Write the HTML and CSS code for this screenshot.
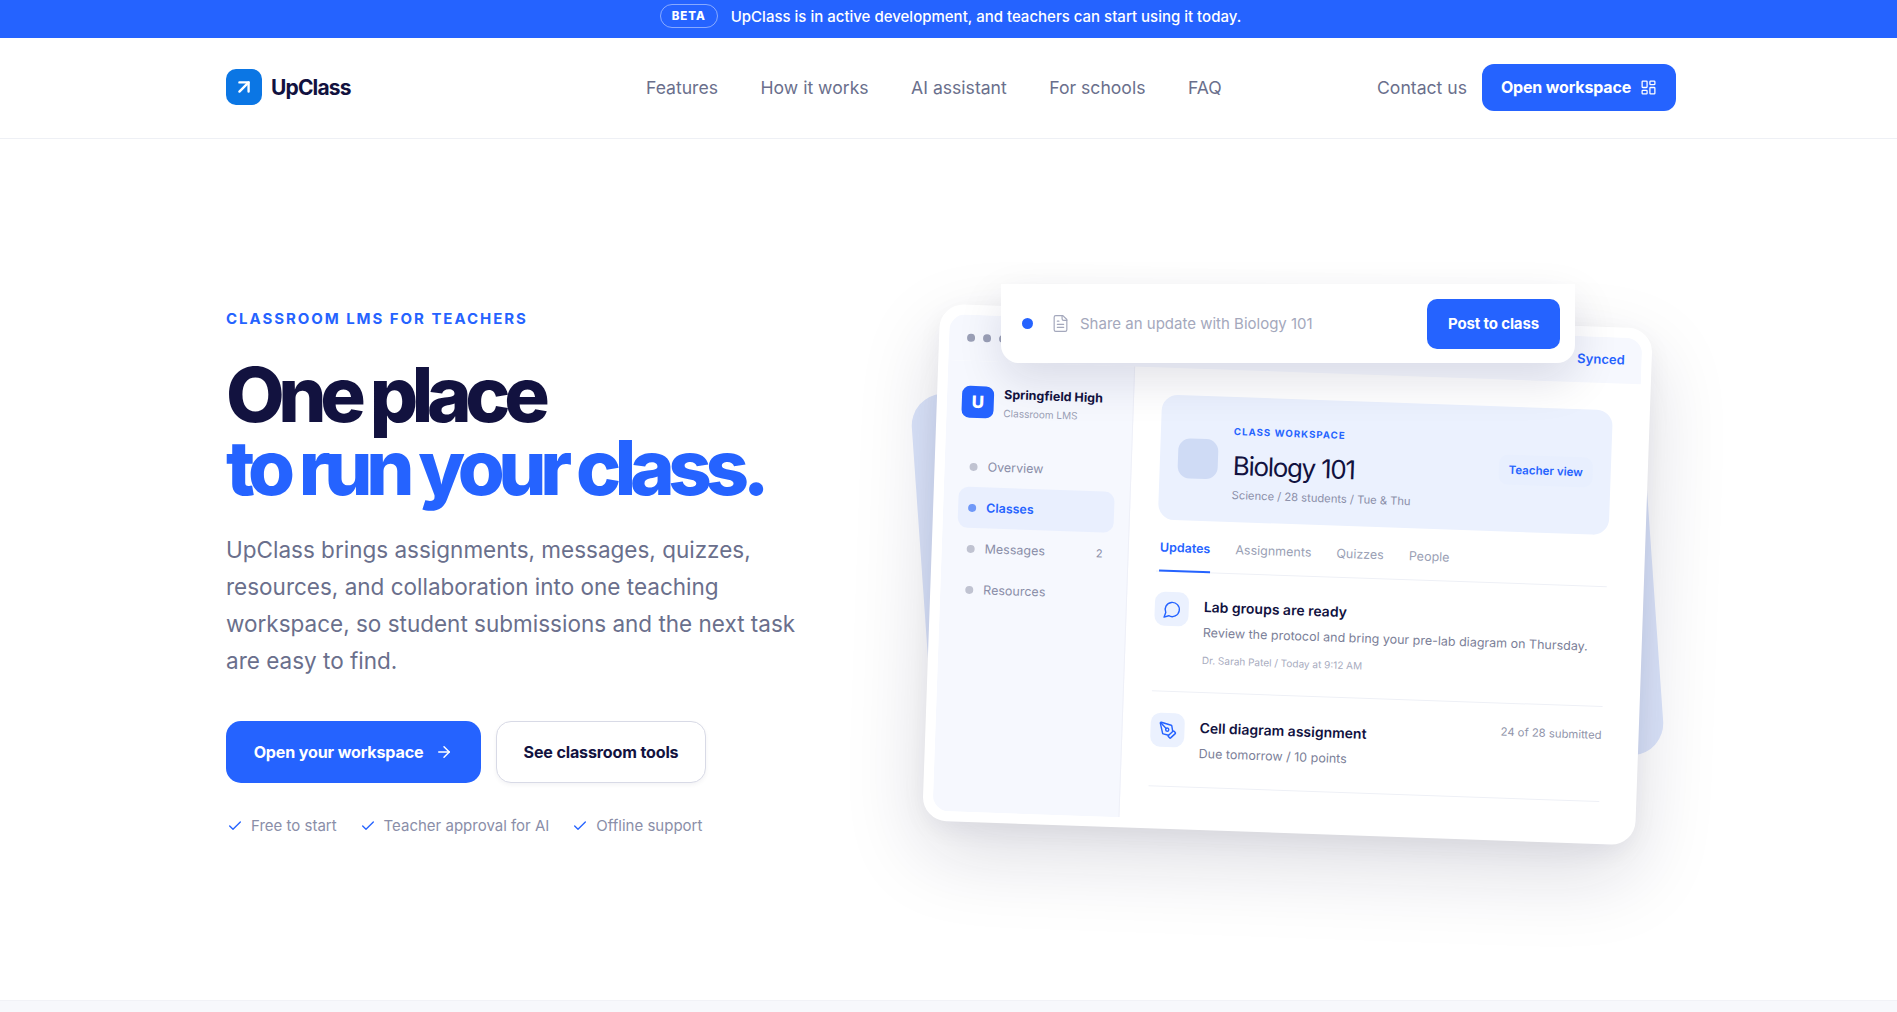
FILE: index.html
```html
<!DOCTYPE html>
<html lang="en">
<head>
    <meta charset="UTF-8">
    <title>UpClass</title>
    <link rel="stylesheet" href="styles.css">
</head>
<body>
    <div class="banner">
        <span class="beta">BETA</span>
        <span>UpClass is in active development, and teachers can start using it today.</span>
    </div>

    <header class="nav">
        <div class="wrap nav-row">
            <a class="logo">
                <span class="logo-mark">
                    <svg viewBox="0 0 24 24" class="icon"><path d="M7 7h10v10"/><path d="M7 17 17 7"/></svg>
                </span>
                UpClass
            </a>
            <nav class="nav-links">
                <a>Features</a>
                <a>How it works</a>
                <a>AI assistant</a>
                <a>For schools</a>
                <a>FAQ</a>
            </nav>
            <div class="nav-actions">
                <a>Contact us</a>
                <button class="nav-btn">
                    Open workspace
                    <svg viewBox="0 0 24 24" class="icon"><rect x="3" y="3" width="7" height="9" rx="1"/><rect x="14" y="3" width="7" height="5" rx="1"/><rect x="14" y="12" width="7" height="9" rx="1"/><rect x="3" y="16" width="7" height="5" rx="1"/></svg>
                </button>
            </div>
        </div>
    </header>

    <main class="wrap hero">
        <section class="copy">
            <div class="eyebrow">CLASSROOM LMS FOR TEACHERS</div>
            <h1>One place<br><span>to run your class.</span></h1>
            <p class="lead">UpClass brings assignments, messages, quizzes, resources, and collaboration into one teaching workspace, so student submissions and the next task are easy to find.</p>
            <div class="cta">
                <button class="btn btn-primary">
                    Open your workspace
                    <svg viewBox="0 0 24 24" class="icon"><path d="M5 12h14"/><path d="m12 5 7 7-7 7"/></svg>
                </button>
                <button class="btn btn-ghost">See classroom tools</button>
            </div>
            <ul class="checks">
                <li><svg viewBox="0 0 24 24" class="icon"><path d="M20 6 9 17l-5-5"/></svg>Free to start</li>
                <li><svg viewBox="0 0 24 24" class="icon"><path d="M20 6 9 17l-5-5"/></svg>Teacher approval for AI</li>
                <li><svg viewBox="0 0 24 24" class="icon"><path d="M20 6 9 17l-5-5"/></svg>Offline support</li>
            </ul>
        </section>

        <section class="stage">
            <div class="back-sheet"></div>

            <div class="card">
                <div class="shell">
                    <div class="topbar">
                        <div class="dots"><i></i><i></i><i></i></div>
                        <span class="synced">Synced</span>
                    </div>
                    <div class="app">
                        <aside class="side">
                            <div class="school">
                                <span class="school-mark">U</span>
                                <div>
                                    <div class="school-name">Springfield High</div>
                                    <div class="school-sub">Classroom LMS</div>
                                </div>
                            </div>
                            <div class="side-item"><i></i>Overview</div>
                            <div class="side-item active"><i></i>Classes</div>
                            <div class="side-item"><i></i>Messages<span class="count">2</span></div>
                            <div class="side-item"><i></i>Resources</div>
                        </aside>
                        <div class="content">
                            <div class="class-head">
                                <span class="class-icon"></span>
                                <div class="class-info">
                                    <div class="class-tag">CLASS WORKSPACE</div>
                                    <div class="class-name">Biology 101</div>
                                    <div class="class-meta">Science / 28 students / Tue &amp; Thu</div>
                                </div>
                                <span class="pill">Teacher view</span>
                            </div>
                            <div class="tabs">
                                <span class="tab active">Updates</span>
                                <span class="tab">Assignments</span>
                                <span class="tab">Quizzes</span>
                                <span class="tab">People</span>
                            </div>
                            <div class="post post-first">
                                <span class="post-icon">
                                    <svg viewBox="0 0 24 24" class="icon"><path d="M7.9 20A9 9 0 1 0 4 16.1L2 22Z"/></svg>
                                </span>
                                <div class="post-body">
                                    <div class="post-title">Lab groups are ready</div>
                                    <div class="post-text">Review the protocol and bring your pre-lab diagram on Thursday.</div>
                                    <div class="post-meta">Dr. Sarah Patel / Today at 9:12 AM</div>
                                </div>
                            </div>
                            <div class="post post-second">
                                <span class="post-icon">
                                    <svg viewBox="0 0 24 24" class="icon"><path d="M15.707 21.293a1 1 0 0 1-1.414 0l-1.586-1.586a1 1 0 0 1 0-1.414l5.586-5.586a1 1 0 0 1 1.414 0l1.586 1.586a1 1 0 0 1 0 1.414z"/><path d="m18 13-1.375-6.874a1 1 0 0 0-.746-.776L3.235 2.028a1 1 0 0 0-1.207 1.207L5.35 15.879a1 1 0 0 0 .776.746L13 18"/><path d="m2.3 2.3 7.286 7.286"/><circle cx="11" cy="11" r="2"/></svg>
                                </span>
                                <div class="post-body">
                                    <div class="post-title">Cell diagram assignment</div>
                                    <div class="post-sub">Due tomorrow / 10 points</div>
                                </div>
                                <span class="post-count">24 of 28 submitted</span>
                            </div>
                        </div>
                    </div>
                </div>
            </div>

            <div class="composer">
                <span class="composer-dot"></span>
                <svg viewBox="0 0 24 24" class="icon composer-doc"><path d="M15 2H6a2 2 0 0 0-2 2v16a2 2 0 0 0 2 2h12a2 2 0 0 0 2-2V7Z"/><path d="M14 2v4a2 2 0 0 0 2 2h4"/><path d="M10 9H8"/><path d="M16 13H8"/><path d="M16 17H8"/></svg>
                <span class="composer-text">Share an update with Biology 101</span>
                <button class="composer-btn">Post to class</button>
            </div>
        </section>
    </main>

    <div class="next-section"></div>
</body>
</html>
```

FILE: styles.css
```css
* {
    box-sizing: border-box;
}
body {
    margin: 0;
    background: #fff;
    color: #12123f;
    font-family: Inter, "Liberation Sans", sans-serif;
    overflow-x: hidden;
}
button {
    font-family: inherit;
    border: 0;
    cursor: pointer;
}
.icon {
    fill: none;
    stroke: currentColor;
    stroke-width: 2;
    stroke-linecap: round;
    stroke-linejoin: round;
}
.wrap {
    width: 1450px;
    margin-left: 226px;
}

/* top banner */
.banner {
    height: 38px;
    padding: 0 0 6px 4px;
    background: #2563ff;
    color: #fff;
    font-size: 15px;
    font-weight: 500;
    display: flex;
    align-items: center;
    justify-content: center;
    gap: 13px;
}
.beta {
    height: 24px;
    width: 58px;
    border: 1px solid rgba(255, 255, 255, 0.45);
    border-radius: 12px;
    font-size: 11.5px;
    font-weight: 800;
    letter-spacing: 0.08em;
    display: flex;
    align-items: center;
    justify-content: center;
}

/* nav */
.nav {
    height: 101px;
    border-bottom: 1px solid #eef0f5;
}
.nav-row {
    height: 98px;
    display: flex;
    align-items: center;
    justify-content: space-between;
}
.logo {
    display: flex;
    align-items: center;
    gap: 9px;
    font-size: 21px;
    font-weight: 700;
    letter-spacing: -0.04em;
}
.logo-mark {
    width: 36px;
    height: 36px;
    border-radius: 10px;
    background: #0b76e4;
    color: #fff;
    display: flex;
    align-items: center;
    justify-content: center;
}
.logo-mark .icon {
    width: 22px;
    height: 22px;
    stroke-width: 2.6;
}
.nav-links {
    display: flex;
    gap: 42.5px;
    margin-left: 140px;
    font-size: 17.6px;
    color: #6a6f8c;
}
.nav-actions {
    display: flex;
    align-items: center;
    gap: 15px;
    font-size: 17.6px;
    color: #6a6f8c;
}
.nav-btn {
    width: 194px;
    height: 47px;
    border-radius: 12px;
    background: #2563ff;
    color: #fff;
    font-size: 16px;
    font-weight: 700;
    letter-spacing: -0.01em;
    display: flex;
    align-items: center;
    justify-content: center;
    gap: 9px;
}
.nav-btn .icon {
    width: 17px;
    height: 17px;
    stroke-width: 1.8;
}

/* hero */
.hero {
    height: 861px;
    display: grid;
    grid-template-columns: 576px 778px;
    column-gap: 96px;
    align-items: center;
}
.copy {
    align-self: start;
    padding-top: 170px;
}
.eyebrow {
    color: #2563ff;
    font-size: 15px;
    font-weight: 700;
    letter-spacing: 0.13em;
    line-height: 20px;
}
h1 {
    margin: 29px 0 0;
    font-size: 76px;
    font-weight: 800;
    line-height: 73px;
    letter-spacing: -0.084em;
}
h1 span {
    color: #2563ff;
}
.lead {
    margin: 27px 0 0;
    font-size: 22.5px;
    line-height: 37px;
    color: #6a6f8c;
}
.cta {
    display: flex;
    gap: 15px;
    margin-top: 42px;
}
.btn {
    height: 62px;
    border-radius: 15px;
    font-size: 16.1px;
    font-weight: 700;
    letter-spacing: -0.01em;
    display: flex;
    align-items: center;
    justify-content: center;
}
.btn-primary {
    width: 255px;
    gap: 12px;
    background: #2563ff;
    color: #fff;
}
.btn-primary .icon {
    width: 18px;
    height: 18px;
}
.btn-ghost {
    width: 210px;
    background: #fff;
    color: #12123f;
    border: 1.5px solid #d8dae6;
    box-shadow: 0 2px 4px rgba(18, 18, 63, 0.05);
}
.checks {
    list-style: none;
    margin: 32px 0 0;
    padding: 0 0 0 1px;
    display: flex;
    gap: 23px;
    font-size: 15px;
    line-height: 22px;
    color: #8a8ea8;
}
.checks li {
    display: flex;
    align-items: center;
    gap: 8px;
}
.checks .icon {
    width: 16px;
    height: 16px;
    color: #2563ff;
}

/* product mockup */
.stage {
    position: relative;
    height: 600px;
    margin-top: 9px;
    display: flex;
    align-items: center;
    justify-content: center;
}
.back-sheet {
    position: absolute;
    left: 25px;
    top: 96px;
    width: 729px;
    height: 409px;
    border-radius: 32px;
    background: #dbe4fa;
    transform: rotate(-4deg);
}
.card {
    position: relative;
    width: 713px;
    height: 517px;
    padding: 10px;
    border-radius: 24px;
    background: #fff;
    transform: rotate(2deg);
    box-shadow: 0 30px 80px rgba(18, 18, 63, 0.15), 0 8px 24px rgba(18, 18, 63, 0.05);
}
.shell {
    height: 100%;
    border-radius: 16px;
    overflow: hidden;
    display: flex;
    flex-direction: column;
}
.topbar {
    height: 46px;
    flex: none;
    padding: 0 17px 0 18px;
    background: #f6f8fe;
    display: flex;
    align-items: center;
    justify-content: space-between;
}
.dots {
    display: flex;
    gap: 8px;
}
.dots i {
    width: 8px;
    height: 8px;
    border-radius: 50%;
    background: #9ba0b7;
}
.synced {
    margin-bottom: 2px;
    color: #2563ff;
    font-size: 13px;
    font-weight: 600;
}
.app {
    flex: 1;
    display: flex;
}
.side {
    width: 187px;
    flex: none;
    padding: 24px 15px 0;
    background: #f6f8fe;
    border-right: 1px solid #eef0f8;
}
.school {
    display: flex;
    align-items: center;
    gap: 10px;
    margin: 0 0 27px 0;
}
.school-mark {
    width: 32px;
    height: 32px;
    flex: none;
    border-radius: 8px;
    background: #2563ff;
    color: #fff;
    font-size: 17px;
    font-weight: 800;
    display: flex;
    align-items: center;
    justify-content: center;
}
.school-name {
    font-size: 12.5px;
    font-weight: 700;
    line-height: 18px;
}
.school-sub {
    margin-top: 2px;
    font-size: 10px;
    line-height: 14px;
    color: #9a9fb5;
}
.side-item {
    height: 41px;
    padding: 0 10px;
    border-radius: 10px;
    font-size: 12.5px;
    color: #8a8ea8;
    display: flex;
    align-items: center;
    gap: 10px;
}
.side-item i {
    width: 8px;
    height: 8px;
    border-radius: 50%;
    background: #c0c3d1;
}
.side-item.active {
    background: #e9effe;
    color: #2563ff;
    font-weight: 600;
}
.side-item.active i {
    background: #6f98f8;
}
.count {
    margin-left: auto;
    font-size: 11px;
}
.content {
    flex: 1;
    padding: 27px 27px 0 28px;
    min-width: 0;
}
.class-head {
    height: 125px;
    padding: 0 18px;
    border-radius: 16px;
    background: #ebf1fe;
    display: flex;
    align-items: center;
}
.class-icon {
    width: 40px;
    height: 40px;
    flex: none;
    margin-right: 15px;
    border-radius: 12px;
    background: #cfdbf5;
}
.class-info {
    margin-top: 8px;
}
.class-tag {
    color: #2563ff;
    font-size: 9.6px;
    font-weight: 700;
    letter-spacing: 0.11em;
    line-height: 14px;
}
.class-name {
    margin-top: 10px;
    font-size: 26px;
    font-weight: 400;
    letter-spacing: -0.05em;
    line-height: 34px;
}
.class-meta {
    margin-top: 4px;
    font-size: 11.2px;
    line-height: 16px;
    color: #8a8ea8;
}
.pill {
    margin-left: auto;
    width: 94px;
    height: 30px;
    border-radius: 9px;
    background: #e8effe;
    color: #2563ff;
    font-size: 11.5px;
    font-weight: 600;
    display: flex;
    align-items: center;
    justify-content: center;
}
.tabs {
    height: 52px;
    padding-left: 3px;
    border-bottom: 1px solid #eef0f6;
    display: flex;
    gap: 25px;
}
.tab {
    height: 52px;
    padding-top: 18px;
    font-size: 12.5px;
    line-height: 20px;
    color: #9a9fb5;
}
.tab.active {
    color: #2563ff;
    font-weight: 600;
    border-bottom: 2px solid #2563ff;
}
.post {
    display: flex;
    gap: 15px;
    border-bottom: 1px solid #eef0f6;
}
.post-first {
    height: 120px;
    padding-top: 20px;
}
.post-second {
    height: 95px;
    padding-top: 21px;
}
.post-icon {
    width: 34px;
    height: 34px;
    flex: none;
    border-radius: 10px;
    background: #ebf1fe;
    color: #2563ff;
    display: flex;
    align-items: center;
    justify-content: center;
}
.post-icon .icon {
    width: 19px;
    height: 19px;
    stroke-width: 1.8;
}
.post-title {
    font-size: 14px;
    font-weight: 600;
    line-height: 20px;
    margin-top: 4px;
}
.post-text {
    margin-top: 6px;
    font-size: 12.5px;
    line-height: 20px;
    color: #7b8098;
}
.post-meta {
    margin-top: 9px;
    font-size: 10px;
    line-height: 16px;
    color: #a8acc0;
}
.post-second .post-title {
    margin-top: 4px;
}
.post-sub {
    margin-top: 7px;
    font-size: 12.5px;
    line-height: 18px;
    color: #7b8098;
}
.post-count {
    margin-left: auto;
    font-size: 11.3px;
    line-height: 14px;
    color: #9094aa;
}

/* floating composer */
.composer {
    position: absolute;
    left: 103px;
    top: 10px;
    width: 574px;
    height: 79px;
    padding: 0 15px 0 21px;
    border-radius: 0 0 18px 18px;
    background: #fff;
    box-shadow: 0 18px 45px rgba(18, 18, 63, 0.12);
    display: flex;
    align-items: center;
}
.composer-dot {
    width: 11px;
    height: 11px;
    flex: none;
    border-radius: 50%;
    background: #2563ff;
}
.composer-doc {
    width: 19px;
    height: 19px;
    flex: none;
    margin-left: 18px;
    color: #a4a8bc;
    stroke-width: 1.5;
}
.composer-text {
    margin-left: 10px;
    font-size: 15px;
    color: #a4a8bc;
}
.composer-btn {
    margin-left: auto;
    width: 133px;
    height: 50px;
    border-radius: 10px;
    background: #2563ff;
    color: #fff;
    font-size: 15px;
    font-weight: 700;
    letter-spacing: -0.01em;
}

.next-section {
    height: 12px;
    background: #f7f8fc;
    border-top: 1px solid #f1f2f7;
}
```
